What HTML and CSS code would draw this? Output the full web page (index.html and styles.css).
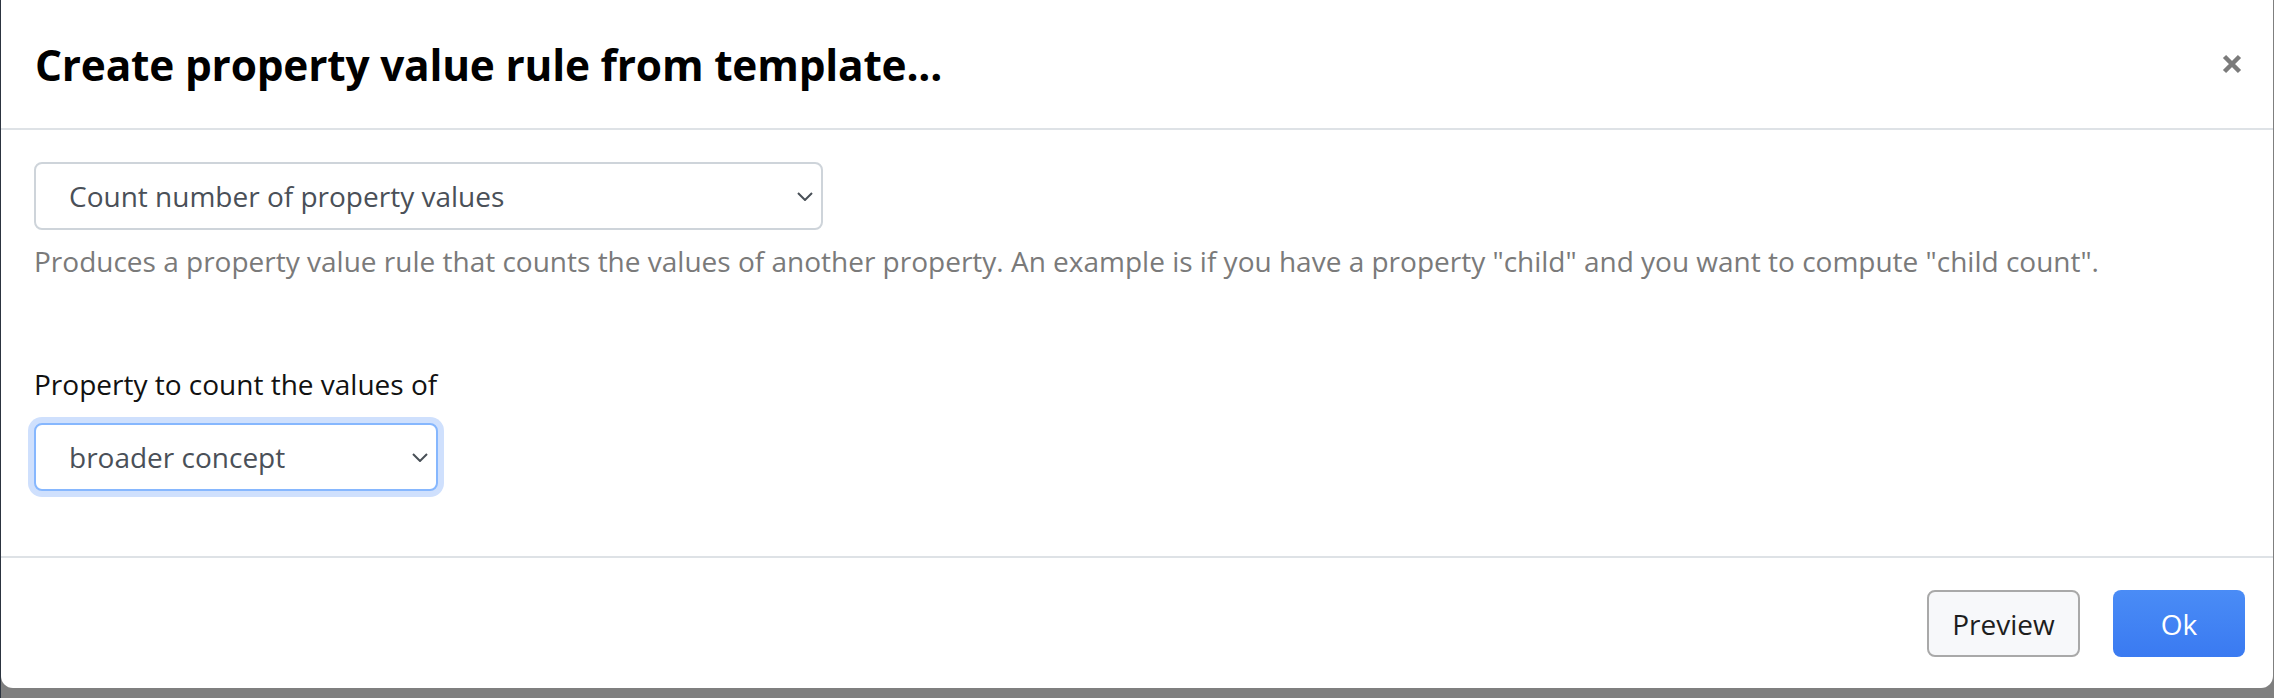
FILE: index.html
```html
<!DOCTYPE html>
<html>
<head>
<meta charset="utf-8">
<link rel="stylesheet" href="styles.css">
</head>
<body>
<div class="backdrop">
  <div class="modal">
    <div class="modal-header">
      <h5 class="modal-title">Create property value rule from template...</h5>
      <button class="close" aria-label="Close">
        <svg width="20" height="20" viewBox="0 0 20 20"><path d="M2.5 2.5 L17.5 17.5 M17.5 2.5 L2.5 17.5" stroke="#7b7b7b" stroke-width="4.5" stroke-linecap="butt"/></svg>
      </button>
    </div>
    <div class="modal-body">
      <div class="select select-wide">
        <span class="select-text">Count number of property values</span>
        <svg class="chev" width="16" height="9" viewBox="0 0 16 9"><path d="M1 1 L8 8 L15 1" fill="none" stroke="#495057" stroke-width="2"/></svg>
      </div>
      <p class="hint">Produces a property value rule that counts the values of another property. An example is if you have a property "child" and you want to compute "child count".</p>
      <label class="label">Property to count the values of</label>
      <div class="select select-narrow focused">
        <span class="select-text">broader concept</span>
        <svg class="chev" width="16" height="9" viewBox="0 0 16 9"><path d="M1 1 L8 8 L15 1" fill="none" stroke="#495057" stroke-width="2"/></svg>
      </div>
    </div>
    <div class="modal-footer">
      <button class="btn btn-secondary">Preview</button>
      <button class="btn btn-primary">Ok</button>
    </div>
  </div>
</div>
</body>
</html>
```
FILE: styles.css
```css
html, body {
  margin: 0;
  padding: 0;
}
body {
  width: 2274px;
  height: 698px;
  background: #7f7f7f;
  font-family: "Open Sans", "Noto Sans", sans-serif;
  overflow: hidden;
}
.backdrop {
  height: 698px;
  padding: 0 1px 0 1px;
  box-sizing: border-box;
  background: linear-gradient(#2c3440, #2c3440) left top / 1px 100% no-repeat, #7f7f7f;
}
.modal {
  background: #fff;
  height: 688px;
  border-radius: 0 0 12px 12px;
  display: flex;
  flex-direction: column;
}
.modal-header {
  height: 128px;
  border-bottom: 2px solid #dee2e6;
  display: flex;
  align-items: center;
  justify-content: space-between;
  padding: 0 31px 0 34px;
  box-sizing: content-box;
}
.modal-title {
  margin: 0;
  font-size: 42.4px;
  font-weight: 700;
  color: #000;
  letter-spacing: -0.2px;
}
.close {
  border: 0;
  background: none;
  padding: 0;
  width: 20px;
  height: 20px;
  display: flex;
}
.modal-body {
  flex: 1;
  padding: 32px 32px 0 33px;
}
.select {
  height: 68px;
  box-sizing: border-box;
  border: 2px solid #ced4da;
  border-radius: 8px;
  display: flex;
  align-items: center;
  justify-content: space-between;
  padding: 0 8px 0 33px;
  background: #fff;
}
.select-wide { width: 789px; }
.select-narrow { width: 404px; }
.select-text {
  font-size: 28px;
  color: #4a5058;
}
.focused {
  border-color: #86b7fe;
  box-shadow: 0 0 0 6px #cfe0fd;
}
.hint {
  margin: 11px 0 0 0;
  font-size: 28px;
  line-height: 40px;
  color: #7a7a7a;
}
.label {
  display: block;
  margin-top: 83px;
  font-size: 28px;
  line-height: 40px;
  color: #111;
}
.select-narrow { margin-top: 19px; }
.modal-footer {
  border-top: 2px solid #dee2e6;
  display: flex;
  justify-content: flex-end;
  gap: 33px;
  padding: 32px 28px 31px 0;
}
.btn {
  height: 67px;
  border-radius: 8px;
  font-family: "Open Sans", "Noto Sans", sans-serif;
  font-size: 28px;
  padding: 0;
}
.btn-secondary {
  width: 153px;
  background: #f7f8fa;
  border: 2px solid #a9a9a9;
  color: #1e1e1e;
}
.btn-primary {
  width: 132px;
  background: linear-gradient(#4a8cf6, #3a7af1);
  border: 0;
  color: #fff;
}
```
